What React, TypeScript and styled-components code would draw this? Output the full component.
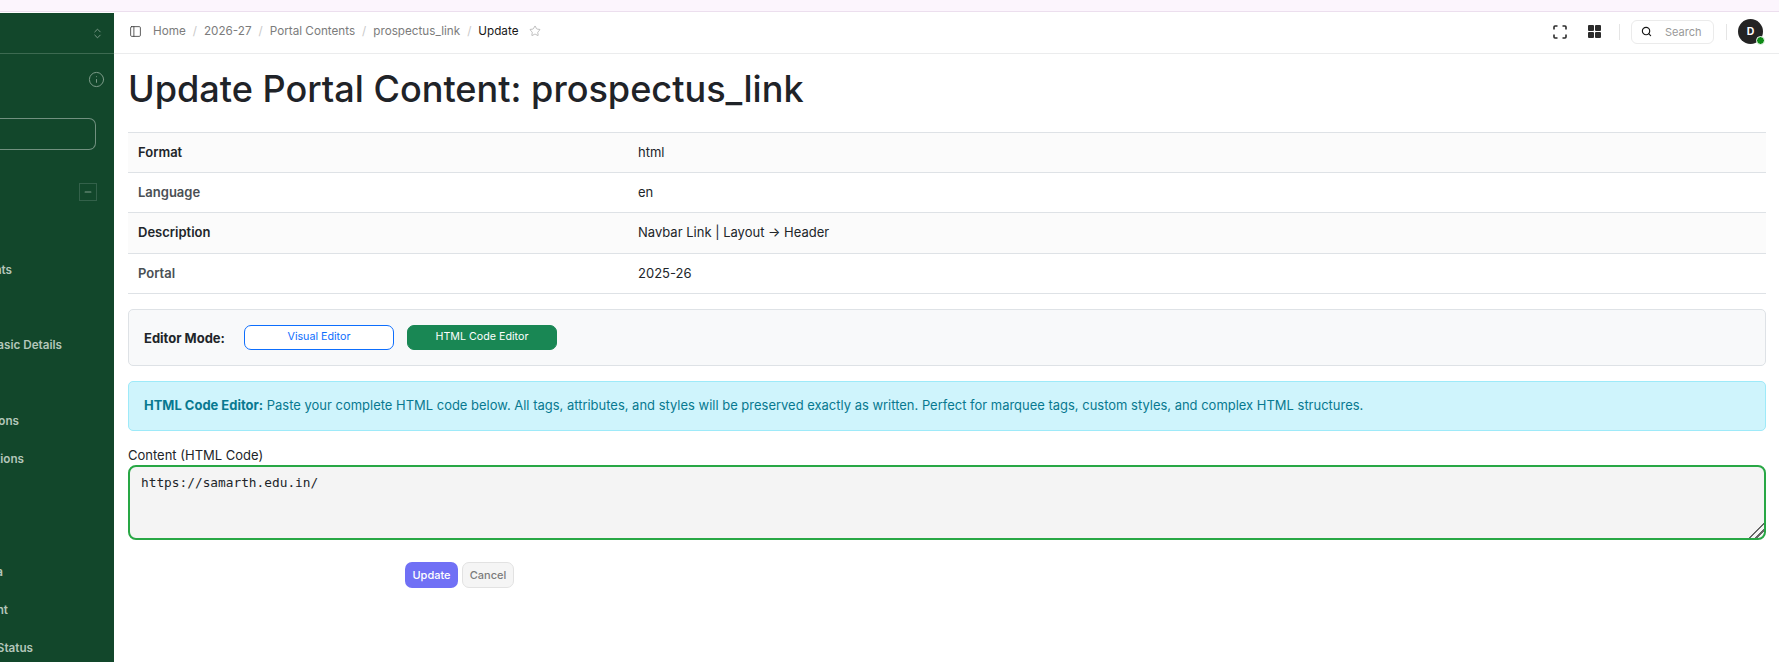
import React from "react";
import styled, { createGlobalStyle } from "styled-components";
import { Info, ChevronsUpDown, Minus, PanelLeft, Star, Search } from "lucide-react";

const Global = createGlobalStyle`
  html, body { margin: 0; padding: 0; background: #fff; }
  body { font-family: Inter, "Liberation Sans", sans-serif; color: #1f272e; overflow: hidden; }
  * { box-sizing: border-box; }
`;

const Page = styled.div`
  width: 1779px;
  height: 662px;
  display: flex;
  flex-direction: column;
  overflow: hidden;
`;
const TopStrip = styled.div`
  height: 12px;
  flex: none;
  background: #fcf5fd;
  border-bottom: 1px solid #ecdfee;
`;
const Body = styled.div`
  flex: 1;
  display: flex;
  min-height: 0;
`;
const Sidebar = styled.aside`
  width: 114px;
  flex: none;
  margin-top: 1px;
  background: #12472b;
  color: #b3c6ba;
  overflow: hidden;
`;
const SideHeader = styled.div`
  height: 41px;
  display: flex;
  align-items: center;
  justify-content: flex-end;
  padding-right: 10px;
  border-bottom: 1px solid #3d6a51;
  color: #8fa899;
`;
const InfoRow = styled.div`
  height: 38px;
  margin-top: 6px;
  display: flex;
  align-items: center;
  justify-content: flex-end;
  padding-right: 9px;
  color: #7d9c8a;
`;
const SideSearch = styled.div`
  height: 32px;
  width: 96px;
  margin-top: 20px;
  border: 1px solid #71907f;
  border-left: none;
  border-radius: 0 7px 7px 0;
`;
const CollapseRow = styled.div`
  margin-top: 33px;
  display: flex;
  justify-content: flex-end;
  padding-right: 17px;
`;
const CollapseBox = styled.div`
  width: 18px;
  height: 18px;
  display: flex;
  align-items: center;
  justify-content: center;
  border: 1px solid #33614a;
  color: #7d9c8a;
`;
const NavList = styled.div`
  margin-top: 50px;
  display: flex;
  flex-direction: column;
`;
const NavItem = styled.div<{ $end: number }>`
  height: 37.8px;
  display: flex;
  align-items: center;
  justify-content: flex-end;
  padding-right: ${(p) => 114 - p.$end}px;
  overflow: hidden;
  white-space: nowrap;
  font-size: 11.7px;
  font-weight: 600;
  & > span { flex: none; }
`;

const Main = styled.main`
  flex: 1;
  min-width: 0;
  display: flex;
  flex-direction: column;
`;
const Header = styled.header`
  height: 42px;
  flex: none;
  display: flex;
  align-items: center;
  justify-content: space-between;
  padding: 0 16px 2px 15px;
  border-bottom: 1px solid #ebeced;
`;
const Crumbs = styled.nav`
  display: flex;
  align-items: center;
  margin-bottom: 1px;
  font-size: 11.7px;
  color: #7c7c7c;
`;
const ToggleIcon = styled.span`
  display: flex;
  margin-right: 11px;
  color: #383838;
`;
const Sep = styled.span`
  margin: 0 7px;
  color: #c9c9c9;
`;
const Current = styled.span`
  color: #171717;
`;
const StarIcon = styled.span`
  display: flex;
  margin-left: 11px;
  color: #999;
`;
const Actions = styled.div`
  display: flex;
  align-items: center;
`;
const IconBtn = styled.span`
  display: flex;
  width: 14px;
  justify-content: center;
  margin-right: 20px;
  color: #2b2b2b;
`;
const LastIconBtn = styled(IconBtn)`
  margin-right: 18px;
`;
const Divider = styled.span`
  width: 1px;
  height: 16px;
  background: #e5e5e5;
`;
const SearchBox = styled.div`
  width: 83px;
  height: 24px;
  margin: 0 12px 0 11px;
  display: flex;
  align-items: center;
  gap: 13px;
  padding-left: 9px;
  border: 1px solid #ebebeb;
  border-radius: 6px;
  font-size: 11px;
  color: #999;
  & svg { color: #171717; }
`;
const Avatar = styled.div`
  position: relative;
  width: 25px;
  height: 25px;
  margin-left: 11px;
  border-radius: 50%;
  background: #242424;
  color: #fff;
  font-size: 10.5px;
  font-weight: 700;
  display: flex;
  align-items: center;
  justify-content: center;
`;
const Dot = styled.span`
  position: absolute;
  right: -2px;
  bottom: -1px;
  width: 9px;
  height: 9px;
  border-radius: 50%;
  background: #0e8a16;
  border: 1.5px solid #fff;
`;

const Content = styled.div`
  padding: 0 13px 0 14px;
`;
const Title = styled.h1`
  margin: 0;
  height: 78px;
  line-height: 70px;
  font-size: 36.1px;
  font-weight: 450;
  color: #1f2328;
`;
const Table = styled.div`
  border-top: 1px solid #dee2e6;
`;
const Row = styled.div<{ $striped?: boolean; $h: number }>`
  height: ${(p) => p.$h}px;
  display: grid;
  grid-template-columns: 500px 1fr;
  align-items: center;
  padding: 0 0 2px 10px;
  font-size: 13px;
  border-bottom: 1px solid #dee2e6;
  background: ${(p) => (p.$striped ? "#fbfbfb" : "#fff")};
  color: #212529;
`;
const RowLabel = styled.span<{ $strong?: boolean }>`
  font-weight: 600;
  color: ${(p) => (p.$strong ? "#212529" : "#4a4f54")};
`;
const ModePanel = styled.div`
  margin-top: 15px;
  height: 57px;
  display: flex;
  align-items: center;
  padding-left: 15px;
  background: #f8f9fa;
  border: 1px solid #dee2e6;
  border-radius: 5px;
`;
const ModeLabel = styled.span`
  font-size: 13px;
  font-weight: 700;
  color: #212529;
  margin-right: 19px;
`;
const ModeBtn = styled.button<{ $active?: boolean }>`
  width: 150px;
  height: 25px;
  margin-right: 13px;
  padding: 0 0 2px;
  border-radius: 7px;
  font-family: inherit;
  font-size: 10.7px;
  font-weight: 400;
  border: 1px solid ${(p) => (p.$active ? "#198754" : "#0d6efd")};
  background: ${(p) => (p.$active ? "#198754" : "#fff")};
  color: ${(p) => (p.$active ? "#fff" : "#0d6efd")};
`;
const Alert = styled.div`
  margin-top: 15px;
  height: 50px;
  display: flex;
  align-items: center;
  padding: 0 0 2px 15px;
  background: #cff4fc;
  border: 1px solid #9eeaf9;
  border-radius: 5px;
  font-size: 12.97px;
  color: #087990;
  & > span > b { font-weight: 700; }
`;
const FieldLabel = styled.label`
  display: block;
  margin-top: 15px;
  height: 19px;
  line-height: 18px;
  font-size: 13px;
  color: #212529;
`;
const CodeArea = styled.textarea`
  display: block;
  width: 100%;
  height: 75px;
  margin: 0;
  padding: 6px 11px;
  border: 2px solid #28a745;
  border-radius: 8px;
  outline: none;
  background: #f4f4f4;
  color: #212529;
  font-family: "DejaVu Sans Mono", monospace;
  font-size: 12.8px;
  line-height: 19px;
  resize: vertical;
  &::-webkit-resizer {
    background: linear-gradient(135deg, transparent 0 48%, #666 48% 55%, transparent 55% 70%, #666 70% 77%, transparent 77%);
  }
`;
const Buttons = styled.div`
  margin-top: 22px;
  margin-left: 277px;
  display: flex;
  gap: 4px;
`;
const PrimaryBtn = styled.button`
  width: 53px;
  height: 26px;
  padding: 0;
  border: none;
  border-radius: 7px;
  background: #7070f5;
  color: #fff;
  font-family: inherit;
  font-size: 11px;
  font-weight: 500;
`;
const CancelBtn = styled.button`
  width: 52px;
  height: 26px;
  padding: 0;
  border: 1px solid #e2e2e2;
  border-radius: 7px;
  background: #f5f5f5;
  color: #7c7c7c;
  font-family: inherit;
  font-size: 11px;
  font-weight: 500;
`;

const nav: [string, number][] = [
  ["Documents", 12],
  ["", 0],
  ["Student Basic Details", 62],
  ["", 0],
  ["Instructions", 19],
  ["Applications", 24],
  ["", 0],
  ["", 0],
  ["Data", 3],
  ["Payment", 8],
  ["Admission Status", 33],
];

const FullscreenIcon = () => (
  <svg width="14" height="14" viewBox="0 0 14 14" fill="none" stroke="currentColor" strokeWidth="1.6">
    <path d="M1 4.5V2a1 1 0 0 1 1-1h2.5M9.5 1H12a1 1 0 0 1 1 1v2.5M13 9.5V12a1 1 0 0 1-1 1H9.5M4.5 13H2a1 1 0 0 1-1-1V9.5" />
  </svg>
);

const GridIcon = () => (
  <svg width="13" height="13" viewBox="0 0 13 13" fill="currentColor">
    <rect x="0" y="0" width="6" height="6" rx="1" />
    <rect x="7" y="0" width="6" height="6" rx="1" />
    <rect x="0" y="7" width="6" height="6" rx="1" />
    <rect x="7" y="7" width="6" height="6" rx="1" />
  </svg>
);

export default function App() {
  return (
    <Page>
      <Global />
      <TopStrip />
      <Body>
        <Sidebar>
          <SideHeader><ChevronsUpDown size={13} strokeWidth={1.5} /></SideHeader>
          <InfoRow><Info size={17} strokeWidth={1.4} /></InfoRow>
          <SideSearch />
          <CollapseRow><CollapseBox><Minus size={10} strokeWidth={2.5} /></CollapseBox></CollapseRow>
          <NavList>
            {nav.map(([t, e], i) => (
              <NavItem key={i} $end={e}><span>{t}</span></NavItem>
            ))}
          </NavList>
        </Sidebar>
        <Main>
          <Header>
            <Crumbs>
              <ToggleIcon><PanelLeft size={13} strokeWidth={1.5} /></ToggleIcon>
              <span>Home</span><Sep>/</Sep>
              <span>2026-27</span><Sep>/</Sep>
              <span>Portal Contents</span><Sep>/</Sep>
              <span>prospectus_link</span><Sep>/</Sep>
              <Current>Update</Current>
              <StarIcon><Star size={12} strokeWidth={1.25} /></StarIcon>
            </Crumbs>
            <Actions>
              <IconBtn><FullscreenIcon /></IconBtn>
              <LastIconBtn><GridIcon /></LastIconBtn>
              <Divider />
              <SearchBox><Search size={11} strokeWidth={2.5} /><span>Search</span></SearchBox>
              <Divider />
              <Avatar>D<Dot /></Avatar>
            </Actions>
          </Header>
          <Content>
            <Title>Update Portal Content: prospectus_link</Title>
            <Table>
              <Row $striped $h={40}><RowLabel $strong>Format</RowLabel><span>html</span></Row>
              <Row $h={40}><RowLabel>Language</RowLabel><span>en</span></Row>
              <Row $striped $h={41}><RowLabel $strong>Description</RowLabel><span>Navbar Link | Layout → Header</span></Row>
              <Row $h={40}><RowLabel>Portal</RowLabel><span>2025-26</span></Row>
            </Table>
            <ModePanel>
              <ModeLabel>Editor Mode:</ModeLabel>
              <ModeBtn>Visual Editor</ModeBtn>
              <ModeBtn $active>HTML Code Editor</ModeBtn>
            </ModePanel>
            <Alert>
              <span><b>HTML Code Editor:</b> Paste your complete HTML code below. All tags, attributes, and styles will be preserved exactly as written. Perfect for marquee tags, custom styles, and complex HTML structures.</span>
            </Alert>
            <FieldLabel>Content (HTML Code)</FieldLabel>
            <CodeArea defaultValue="https://samarth.edu.in/" spellCheck={false} />
            <Buttons>
              <PrimaryBtn>Update</PrimaryBtn>
              <CancelBtn>Cancel</CancelBtn>
            </Buttons>
          </Content>
        </Main>
      </Body>
    </Page>
  );
}
